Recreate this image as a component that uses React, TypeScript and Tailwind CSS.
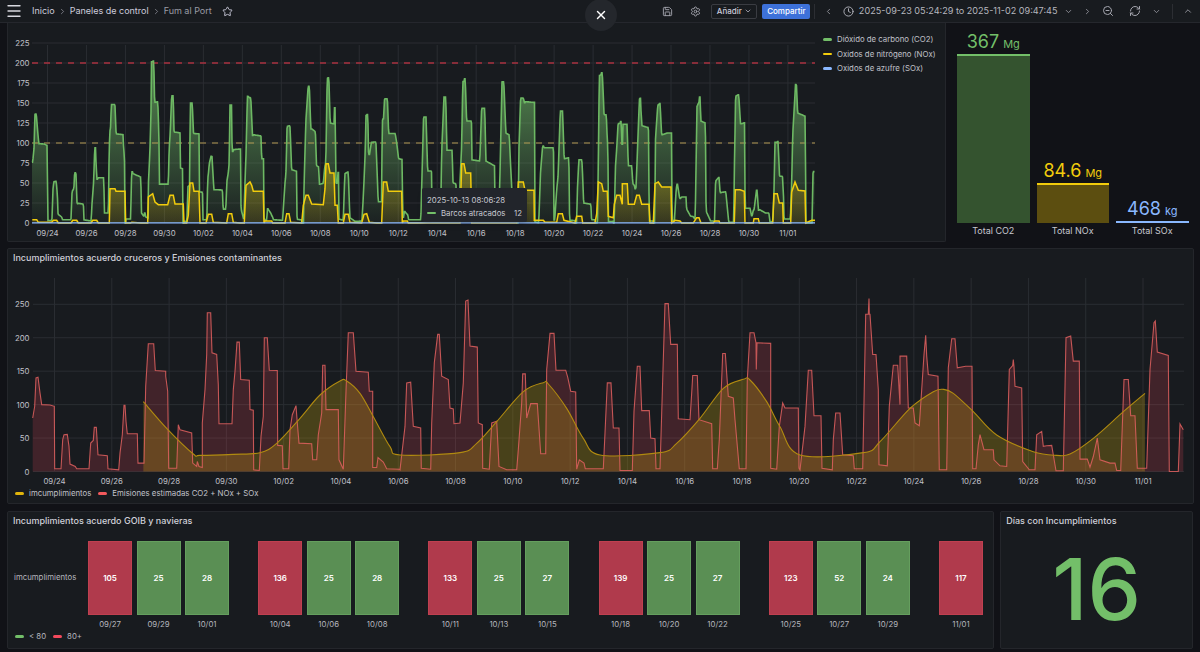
import React from "react";
import {
  ChevronDown,
  ChevronLeft,
  ChevronRight,
  ChevronUp,
  Clock,
  Menu,
  RefreshCw,
  Save,
  Settings,
  Star,
  X,
  ZoomOut,
} from "lucide-react";

type Pt = [number, number];

// traced from the 3x crops: [x * 3, pixels * 3]
const pairs = (raw: number[], offset: number, toY: (v: number) => number): Pt[] => {
  const out: Pt[] = [];
  for (let i = 0; i < raw.length; i += 2) out.push([(raw[i] + offset) / 3, toY(raw[i + 1])]);
  return out;
};

const emiValue = (zy: number) => (575 - zy) / 2;
const noxValue = (zy: number) => (278 - zy) / 2.4;

const EMISSIONS: Pt[] = [
  ...pairs(
    [98,415,104,380,108,295,114,293,120,340,125,375,150,376,163,380,164,567,183,567,188,480,192,465,202,464,207,500,210,553,226,560,230,567,267,567,272,490,280,482,283,443,289,443,294,525,322,528,324,567,356,570,360,520,367,465,372,377,375,377,378,425,382,462,412,462,414,550,432,550,437,320,445,193,461,193,466,273,497,275,497,290,503,335,506,565,530,565,535,435,540,450,575,460,578,550,590,560,592,545,597,560,607,563,607,430,615,330,620,225,622,100,632,100,636,220,650,225,655,315,657,432,696,432,700,330,705,275,711,188,718,188,722,300,748,302,750,390,760,392,761,570,778,572,783,470,790,410,793,175,802,175,808,272,832,273,833,497,847,498,849,567,866,567,870,450,877,405,888,378,892,430,897,490,935,492,938,540,950,540,955,465,965,400,968,257,975,257,978,390,1015,390,1017,540,1030,568,1038,335,1045,160,1060,160,1068,275,1105,278,1108,335,1118,335,1118,563,1130,563,1134,533,1150,547,1160,567,1198,568],
    0,
    emiValue,
  ),
  ...pairs(
    [0,570,15,440,20,310,32,308,40,440,62,445,64,565,92,568,95,430,103,250,113,165,118,165,125,290,145,300,150,385,160,388,162,432,180,430,190,310,197,65,204,62,210,200,232,203,235,430,247,435,248,565,268,568,275,430,290,425,297,560,320,570,350,570,355,510,365,370,368,283,376,283,380,415,392,372,412,372,418,460,422,522,437,522,440,270,450,162,462,162,468,272,497,272,503,293,512,335,527,337,530,568,538,540,552,550,556,567,610,567,615,460,622,310,633,310,640,445,657,445,660,572,697,572,702,395,712,260,720,260,725,393,748,393,752,475,765,477,768,567,780,567,785,400,795,73,805,73,812,195,832,195,835,417,870,420,875,340,878,288,892,288,897,420,935,432,938,567,952,567,958,480,968,222,976,222,985,350,1000,355,1005,420,1018,567,1038,567,1042,300,1050,160,1062,160,1068,190,1069,270,1071,190,1112,192,1112,565,1130,568,1138,440,1148,370,1155,385,1195,385,1197,565],
    1200,
    emiValue,
  ),
  ...pairs(
    [0,570,15,440,25,272,35,272,42,408,63,408,66,565,97,570,100,480,107,400,120,400,128,525,160,528,163,567,188,567,197,105,205,105,207,58,208,105,210,105,218,225,228,225,235,330,237,555,262,558,268,380,280,257,293,257,300,375,300,230,320,230,325,385,340,385,345,430,358,438,365,330,372,225,377,168,380,230,385,285,414,290,418,570,440,570,445,265,455,178,465,178,472,265,497,260,516,260,518,567,528,567,535,495,540,465,552,510,580,510,582,540,600,558,620,560,628,270,638,258,640,240,642,262,645,320,665,325,668,545,688,570,705,570,710,465,725,455,730,500,740,498,755,497,768,573,790,573,798,175,812,170,820,245,838,245,840,538,862,538,870,562,880,530,892,475,900,540,930,550,945,550,950,572,962,572,972,300,985,300,992,408,1005,408,1012,565,1040,565,1050,270,1062,130,1066,125,1072,218,1105,228,1108,575,1135,575,1140,433,1150,450],
    2400,
    emiValue,
  ),
];

const NOX: Pt[] = [
  ...pairs(
    [97,268,110,268,115,276,155,276,160,270,170,270,175,278,213,278,218,270,230,270,235,278,273,278,278,270,290,270,295,278,328,278,330,175,345,175,348,183,375,183,377,278,392,278,395,276,423,278,443,278,445,200,458,190,465,215,475,223,503,223,510,195,520,195,525,221,550,221,552,278,560,278,565,255,570,158,578,158,582,183,597,183,600,278,618,278,625,252,635,252,640,276,680,278,685,250,695,250,700,276,720,278,733,278,738,165,750,155,755,165,760,183,790,183,792,278,795,272,815,272,818,278,855,278,860,250,867,250,872,276,905,278,910,225,918,195,925,195,935,221,970,223,975,175,978,100,985,100,990,128,1002,128,1005,225,1012,225,1015,278,1030,278,1035,252,1045,252,1050,276,1085,278,1092,252,1100,250,1108,276,1130,278,1145,278,1150,155,1160,155,1165,183,1205,183,1207,278,1210,272,1222,272,1225,278,1260,278],
    0,
    noxValue,
  ),
  ...pairs(
    [100,278,180,278,185,100,192,100,197,128,212,128,215,278,350,278,355,155,370,155,375,180,402,180,403,270,430,270,435,276,470,276,475,250,487,250,492,270,525,278,530,258,545,258,548,278,585,278,590,250,595,155,605,160,610,183,622,183,625,258,640,262,643,222,650,195,660,195,667,222,667,160,682,160,685,222,703,222,710,195,718,195,725,222,747,222,750,278,760,278,765,160,775,155,785,170,813,170,815,278,825,270,840,272,845,278,880,278,890,262,897,262,903,278,940,278,945,272,957,272,960,278,1003,278,1006,178,1020,178,1033,183,1035,278,1060,278,1062,265,1075,265,1078,278,1118,278,1122,190,1132,190,1138,218,1148,218,1150,278,1172,278,1175,185,1185,155,1195,180,1215,182,1217,278,1235,270,1245,270],
    1200,
    noxValue,
  ),
];

const BREACHES: Pt[] = [
  ...pairs(
    [430,365,500,445,580,522,600,526,700,523,780,518,830,490,900,415,960,345,1020,303,1040,303,1080,340,1120,410,1170,500],
    0,
    (v) => v,
  ),
  ...pairs(
    [0,525,180,518,230,490,290,425,370,335,430,308,445,312,500,385,550,475,600,525,780,518,830,490,900,415,970,325,1030,298,1050,300,1100,365,1140,440],
    1200,
    (v) => v,
  ),
  ...pairs(
    [0,525,190,518,240,485,330,385,400,335,430,328,460,340,520,395,590,465,700,515,770,526,810,522,880,475,970,395,1035,340],
    2400,
    (v) => v,
  ),
];

const interp = (s: Pt[], x: number) => {
  if (x <= s[0][0]) return s[0][1];
  for (let i = 1; i < s.length; i++) {
    if (x <= s[i][0]) {
      const [x0, y0] = s[i - 1];
      const [x1, y1] = s[i];
      return x1 === x0 ? y1 : y0 + ((y1 - y0) * (x - x0)) / (x1 - x0);
    }
  }
  return s[s.length - 1][1];
};

const toWide = (x: number) => 54.5 + (x - 47.5) * (57.29 / 38.97);

// CO2 is the total minus NOx, with a median so misaligned edges don't spike
const buildCo2 = (): Pt[] => {
  const raw: Pt[] = [];
  for (let x = 32; x <= 814.5; x += 0.5) {
    raw.push([x, Math.max(0, interp(EMISSIONS, toWide(x)) - interp(NOX, x))]);
  }
  return raw.map(([x], i) => {
    const win = raw.slice(Math.max(0, i - 1), i + 2).map((p) => p[1]).sort((a, b) => a - b);
    return [x, win[Math.floor(win.length / 2)]] as Pt;
  });
};

const CO2 = buildCo2();

const y1 = (v: number) => 223 - v * 0.8;
const y2 = (v: number) => 471.5 - v * 0.6688;

const line = (s: Pt[], fy: (v: number) => number) =>
  s.map(([x, v], i) => `${i ? "L" : "M"}${x.toFixed(1)} ${fy(v).toFixed(1)}`).join("");
const area = (s: Pt[], fy: (v: number) => number, base: number) =>
  `${line(s, fy)}L${s[s.length - 1][0].toFixed(1)} ${base}L${s[0][0].toFixed(1)} ${base}Z`;

const smooth = (s: Pt[]) => {
  let d = `M${s[0][0]} ${s[0][1]}`;
  for (let i = 0; i < s.length - 1; i++) {
    const p0 = s[Math.max(0, i - 1)];
    const p1 = s[i];
    const p2 = s[i + 1];
    const p3 = s[Math.min(s.length - 1, i + 2)];
    d += `C${p1[0] + (p2[0] - p0[0]) / 6} ${p1[1] + (p2[1] - p0[1]) / 6} ${p2[0] - (p3[0] - p1[0]) / 6} ${p2[1] - (p3[1] - p1[1]) / 6} ${p2[0]} ${p2[1]}`;
  }
  return d;
};

const breachY: Pt[] = BREACHES.map(([x, zy]) => [x, 280 + zy / 3]);
const breachLine = smooth(breachY);
const breachArea = `${breachLine}L${breachY[breachY.length - 1][0]} 471.5L${breachY[0][0]} 471.5Z`;

const DATES = [
  "09/24","09/26","09/28","09/30","10/02","10/04","10/06","10/08","10/10","10/12",
  "10/14","10/16","10/18","10/20","10/22","10/24","10/26","10/28","10/30","11/01",
];

const GROUPS: { v: number; d: string }[][] = [
  [{ v: 105, d: "09/27" }, { v: 25, d: "09/29" }, { v: 28, d: "10/01" }],
  [{ v: 136, d: "10/04" }, { v: 25, d: "10/06" }, { v: 28, d: "10/08" }],
  [{ v: 133, d: "10/11" }, { v: 25, d: "10/13" }, { v: 27, d: "10/15" }],
  [{ v: 139, d: "10/18" }, { v: 25, d: "10/20" }, { v: 27, d: "10/22" }],
  [{ v: 123, d: "10/25" }, { v: 52, d: "10/27" }, { v: 24, d: "10/29" }],
  [{ v: 117, d: "11/01" }],
];

function EmissionsChart() {
  return (
    <svg width={811} height={219} viewBox="8 23 811 219" className="shrink-0 text-[7.8px]">
      <defs>
        <linearGradient id="co2" gradientUnits="userSpaceOnUse" x1="0" y1="43" x2="0" y2="223">
          <stop offset="0" stopColor="#73bf69" stopOpacity="0.75" />
          <stop offset="1" stopColor="#73bf69" stopOpacity="0.04" />
        </linearGradient>
        <linearGradient id="nox" gradientUnits="userSpaceOnUse" x1="0" y1="130" x2="0" y2="223">
          <stop offset="0" stopColor="#f2cc0c" stopOpacity="0.5" />
          <stop offset="1" stopColor="#f2cc0c" stopOpacity="0.12" />
        </linearGradient>
      </defs>
      {[0, 25, 50, 75, 100, 125, 150, 175, 200, 225].map((v) => (
        <g key={v}>
          <line x1={32} x2={815} y1={y1(v)} y2={y1(v)} stroke="#2a2d32" />
          <text x={29.5} y={y1(v) + 3} textAnchor="end" fill="#c0c1c9">{v}</text>
        </g>
      ))}
      {DATES.map((d, i) => (
        <g key={d}>
          <line x1={47.5 + i * 38.97} x2={47.5 + i * 38.97} y1={45} y2={223} stroke="#2a2d32" />
          <text x={47.5 + i * 38.97} y={235.5} textAnchor="middle" fill="#c0c1c9">{d}</text>
        </g>
      ))}
      <path d={area(CO2, y1, 223)} fill="url(#co2)" />
      <path d={area(NOX, y1, 223)} fill="url(#nox)" />
      <line x1={32} x2={815} y1={63} y2={63} stroke="#a8323f" strokeWidth={1.3} strokeDasharray="6 6" />
      <line x1={32} x2={815} y1={143} y2={143} stroke="#b39a52" strokeWidth={1} strokeDasharray="6 6" />
      <path d={line(CO2, y1)} fill="none" stroke="#6db863" strokeWidth={1.6} />
      <path d={line(NOX, y1)} fill="none" stroke="#f2cc0c" strokeWidth={1.5} />
      <line x1={32} x2={815} y1={222.8} y2={222.8} stroke="#8ab8ff" strokeWidth={1.2} />
    </svg>
  );
}

function ComplianceChart() {
  return (
    <svg width={1185} height={212} viewBox="8 276 1185 212" className="block text-[7.8px]">
      {[0, 50, 100, 150, 200, 250].map((v) => (
        <g key={v}>
          <line x1={33} x2={1184} y1={y2(v)} y2={y2(v)} stroke="#2a2d32" />
          <text x={29.5} y={y2(v) + 3} textAnchor="end" fill="#c0c1c9">{v}</text>
        </g>
      ))}
      {DATES.map((d, i) => (
        <g key={d}>
          <line x1={54.5 + i * 57.29} x2={54.5 + i * 57.29} y1={278} y2={471.5} stroke="#2a2d32" />
          <text x={54.5 + i * 57.29} y={483.5} textAnchor="middle" fill="#c0c1c9">{d}</text>
        </g>
      ))}
      <path d={area(EMISSIONS, y2, 471.5)} fill="#f2495c" fillOpacity={0.19} />
      <path d={breachArea} fill="#d6ac0a" fillOpacity={0.26} />
      <path d={line(EMISSIONS, y2)} fill="none" stroke="#e0605f" strokeOpacity={0.85} strokeWidth={1.1} />
      <path d={breachLine} fill="none" stroke="#b08a10" strokeWidth={1.1} />
    </svg>
  );
}

function TotalBar({ value, unit, label, color, fill, barH }: { value: string; unit: string; label: string; color: string; fill: string; barH: number }) {
  return (
    <div className="flex w-[72.5px] flex-col items-center">
      <div className="flex items-baseline gap-[4px] text-[18px] leading-[20px]" style={{ color }}>
        {value}
        <span className="text-[11px]">{unit}</span>
      </div>
      <div className="w-full border-t-2" style={{ height: barH, background: fill, borderColor: color }} />
      <div className="mt-[1px] h-[16px] text-[9px] leading-[14px] text-[#c7c8d0]">{label}</div>
    </div>
  );
}

function LegendItem({ color, label }: { color: string; label: string }) {
  return (
    <div className="flex items-center">
      <span className="h-[2.5px] w-[9px] rounded-full" style={{ background: color }} />
      <span className="ml-[5px]">{label}</span>
    </div>
  );
}

export default function App() {
  return (
    <div className="relative flex h-[652px] w-[1200px] flex-col overflow-hidden bg-[#111217] font-['Inter',sans-serif] text-[#ccccdc]">
      <header className="flex h-[23px] shrink-0 items-center border-b border-[#25272d] bg-[#181b1f] text-[9px]">
        <Menu className="ml-[5px] h-[18px] w-[18px] text-[#d8d9e0]" strokeWidth={1.8} />
        <span className="ml-[9px]">Inicio</span>
        <ChevronRight className="mx-[3px] h-[9px] w-[9px] text-[#8e8f98]" />
        <span>Paneles de control</span>
        <ChevronRight className="mx-[3px] h-[9px] w-[9px] text-[#8e8f98]" />
        <span className="text-[#9a9ba5]">Fum al Port</span>
        <Star className="ml-[10px] h-[11px] w-[11px]" />

        <div className="ml-auto flex items-center">
          <Save className="h-[11px] w-[11px] text-[#a5a6af]" />
          <Settings className="ml-[17px] h-[11px] w-[11px] text-[#a5a6af]" />
          <button className="ml-[10.5px] flex h-[15px] w-[46px] items-center justify-center gap-[2px] rounded-[2px] border border-[#3a3c42] text-[8px] font-medium">
            Añadir <ChevronDown className="h-[8px] w-[8px]" />
          </button>
          <button className="ml-[5px] flex h-[15px] w-[48px] items-center justify-center rounded-[2px] bg-[#3d71d9] text-[8px] font-medium text-white">
            Compartir
          </button>
          <span className="ml-[4px] h-[15px] w-px bg-[#2c2e33]" />
          <ChevronLeft className="ml-[9px] h-[9px] w-[9px] text-[#a5a6af]" />
          <Clock className="ml-[10px] h-[11px] w-[11px] text-[#b5b6be]" />
          <span className="ml-[4.5px] text-[9.1px] whitespace-nowrap text-[#b5b6be]">2025-09-23 05:24:29 to 2025-11-02 09:47:45</span>
          <ChevronDown className="ml-[6.5px] h-[9px] w-[9px] text-[#a5a6af]" />
          <ChevronRight className="ml-[10px] h-[9px] w-[9px] text-[#a5a6af]" />
          <ZoomOut className="ml-[9.5px] h-[12px] w-[12px] text-[#a5a6af]" />
          <RefreshCw className="ml-[15px] h-[12px] w-[12px] text-[#a5a6af]" />
          <ChevronDown className="ml-[11.5px] h-[9px] w-[9px] text-[#a5a6af]" />
          <span className="ml-[11px] h-[15px] w-px bg-[#2c2e33]" />
          <ChevronUp className="ml-[10px] mr-[7px] h-[10px] w-[10px] text-[#a5a6af]" />
        </div>
      </header>

      <main className="flex flex-1 flex-col px-[7px]">
        <div className="flex h-[219px] shrink-0">
          <section className="relative flex w-[939px] rounded-b-[2px] border border-t-0 border-[#24262b] bg-[#181b1f]">
            <EmissionsChart />
            <div className="flex flex-col gap-[3.5px] pt-[11px] pl-[4px] text-[7.8px] leading-[11px] whitespace-nowrap text-[#c0c1c9]">
              <LegendItem color="#73bf69" label="Dióxido de carbono (CO2)" />
              <LegendItem color="#f2cc0c" label="Oxidos de nitrógeno (NOx)" />
              <LegendItem color="#8ab8ff" label="Oxidos de azufre (SOx)" />
            </div>
            <div className="absolute top-[165px] left-[414px] h-[34px] w-[105px] rounded-[2px] bg-[#22252b] px-[5px] pt-[6px] text-[7.8px] leading-[12px] whitespace-nowrap text-[#c7c8d0] shadow-md">
              <div>2025-10-13 08:06:28</div>
              <div className="mt-[1px] flex items-center">
                <span className="h-[2.5px] w-[9px] rounded-full bg-[#73bf69]" />
                <span className="ml-[5px]">Barcos atracados</span>
                <span className="ml-auto">12</span>
              </div>
            </div>
          </section>
          <section className="ml-[11px] flex items-end gap-[7px] pb-[2px]">
            <TotalBar value="367" unit="Mg" label="Total CO2" color="#73bf69" fill="#34532f" barH={169} />
            <TotalBar value="84.6" unit="Mg" label="Total NOx" color="#f2cc0c" fill="#5c4e10" barH={40} />
            <TotalBar value="468" unit="kg" label="Total SOx" color="#8ab8ff" fill="#2c3a52" barH={2} />
          </section>
        </div>

        <section className="mt-[6px] h-[256px] w-[1187px] shrink-0 rounded-[2px] border border-[#24262b] bg-[#181b1f]">
          <h2 className="h-[27px] pl-[5px] text-[9px] leading-[17px] font-medium text-[#d0d1d9]">
            Incumplimientos acuerdo cruceros y Emisiones contaminantes
          </h2>
          <ComplianceChart />
          <div className="flex gap-[7px] pl-[7px] text-[7.8px] leading-[11px] text-[#c0c1c9]">
            <LegendItem color="#e0b40c" label="imcumplimientos" />
            <LegendItem color="#f2595c" label="Emisiones estimadas CO2 + NOx + SOx" />
          </div>
        </section>

        <div className="mt-[7px] flex h-[138px] shrink-0 gap-[6px]">
          <section className="flex w-[988px] flex-col rounded-[2px] border border-[#24262b] bg-[#181b1f] pl-[6px]">
            <h2 className="-ml-[1px] h-[29px] text-[9px] leading-[18px] font-medium text-[#d0d1d9]">
              Incumplimientos acuerdo GOIB y navieras
            </h2>
            <div className="flex items-start">
              <div className="flex h-[74px] w-[74px] shrink-0 items-center text-[7.8px] text-[#b5b6be]">imcumplimientos</div>
              <div className="flex gap-[29.2px]">
                {GROUPS.map((g) => (
                  <div key={g[0].d} className="flex gap-[4.5px]">
                    {g.map((c) => (
                      <div key={c.d} className="flex w-[44px] flex-col items-center">
                        <div
                          className={`flex h-[74px] w-full items-center justify-center border text-[8px] font-semibold text-white ${
                            c.v >= 80 ? "border-[#c04050] bg-[#b03a4c]" : "border-[#659f5e] bg-[#5a8f54]"
                          }`}
                        >
                          {c.v}
                        </div>
                        <span className="mt-[3px] text-[7.8px] leading-[12px] text-[#b5b6be]">{c.d}</span>
                      </div>
                    ))}
                  </div>
                ))}
              </div>
            </div>
            <div className="mt-[1px] flex gap-[7px] pl-[1px] text-[7.8px] leading-[11px] text-[#b5b6be]">
              <LegendItem color="#73bf69" label="< 80" />
              <LegendItem color="#f2495c" label="80+" />
            </div>
          </section>
          <section className="flex w-[193px] flex-col rounded-[2px] border border-[#24262b] bg-[#181b1f] pl-[5px]">
            <h2 className="h-[19px] text-[9px] leading-[18px] font-medium text-[#d0d1d9]">Días con Incumplimientos</h2>
            <div className="flex flex-1 items-center justify-center pr-[5px] text-[85px] leading-none font-medium text-[#73bf69]">
              16
            </div>
          </section>
        </div>
      </main>

      <button className="absolute top-[-1px] left-[585px] flex h-[32px] w-[32px] items-center justify-center rounded-full bg-[#24272c] text-white">
        <X className="h-[14px] w-[14px]" strokeWidth={2.5} />
      </button>
    </div>
  );
}
